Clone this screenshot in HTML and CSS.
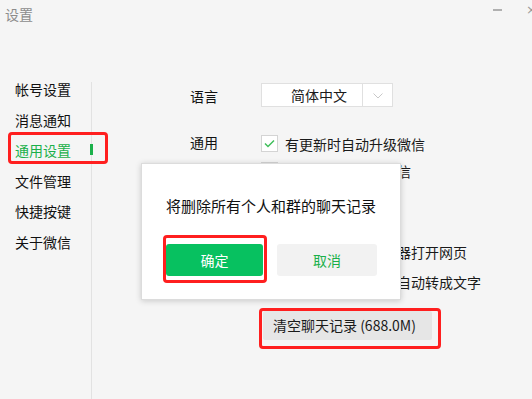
FILE: index.html
```html
<!DOCTYPE html>
<html lang="zh-CN">
<head>
    <meta charset="UTF-8">
    <meta name="viewport" content="width=device-width, initial-scale=1.0">
    <title>设置</title>
    <link rel="stylesheet" href="styles.css">
</head>
<body>
    <div class="window">
        <div class="titlebar">
            <span class="title">设置</span>
            <div class="controls">
                <span class="btn-min"></span>
                <span class="btn-close">×</span>
            </div>
        </div>

        <div class="main">
            <ul class="sidebar">
                <li>帐号设置</li>
                <li>消息通知</li>
                <li class="active">通用设置</li>
                <li>文件管理</li>
                <li>快捷按键</li>
                <li>关于微信</li>
            </ul>

            <div class="content">
                <div class="row">
                    <span class="label label-lang">语言</span>
                    <div class="select">
                        <span class="select-value">简体中文</span>
                        <span class="select-arrow">
                            <svg width="10" height="6" viewBox="0 0 10 6"><path d="M0.5 0.5 L5 5 L9.5 0.5" fill="none" stroke="#c8c8c8" stroke-width="1"/></svg>
                        </span>
                    </div>
                </div>

                <div class="row row-general">
                    <span class="label">通用</span>
                    <div class="options">
                        <div class="option">
                            <span class="checkbox checked">
                                <svg width="13" height="13" viewBox="0 0 13 13"><path d="M2 6.5 L5 9.5 L11 3.5" fill="none" stroke="#3fbf5a" stroke-width="1.5"/></svg>
                            </span>
                            <span>有更新时自动升级微信</span>
                        </div>
                        <div class="option">
                            <span class="checkbox"></span>
                            <span>开机时自动启动微信</span>
                        </div>
                        <div class="option">
                            <span class="checkbox"></span>
                            <span>保留聊天记录</span>
                        </div>
                        <div class="option">
                            <span class="checkbox"></span>
                            <span>显示网络搜索历史</span>
                        </div>
                        <div class="option">
                            <span class="checkbox"></span>
                            <span>使用系统默认浏览器打开网页</span>
                        </div>
                        <div class="option option-last">
                            <span class="checkbox"></span>
                            <span>聊天中的语音消息自动转成文字</span>
                        </div>
                        <button class="btn-clear">清空聊天记录 (688.0M)</button>
                    </div>
                </div>
            </div>
        </div>

        <!-- confirm dialog -->
        <div class="dialog">
            <p class="dialog-text">将删除所有个人和群的聊天记录</p>
            <div class="dialog-buttons">
                <button class="btn-ok">确定</button>
                <button class="btn-cancel">取消</button>
            </div>
        </div>
    </div>
</body>
</html>
```

FILE: styles.css
```css
*, *::before, *::after {
    box-sizing: border-box;
}

body {
    margin: 0;
    font-family: "Noto Sans CJK SC", "Liberation Sans", sans-serif;
    font-size: 14px;
    color: #1a1a1a;
    background: #f5f5f5;
}

.window {
    position: relative;
    width: 532px;
    height: 399px;
    overflow: hidden;
    background: #f5f5f5;
}

.titlebar {
    display: flex;
    justify-content: space-between;
    align-items: center;
    height: 28px;
    padding-left: 5px;
}

.title {
    font-size: 14px;
    line-height: 14px;
    color: #8c8c8c;
    margin-top: -1px;
}

.controls {
    display: flex;
    align-items: center;
    gap: 24px;
    margin-right: -5px;
    margin-top: -9px;
}

.btn-min {
    width: 9px;
    height: 2px;
    background: #b0b0b0;
}

.btn-close {
    font-family: "DejaVu Sans", sans-serif;
    font-size: 13px;
    line-height: 13px;
    color: #999;
}

.main {
    display: flex;
    height: 371px;
}

.sidebar {
    list-style: none;
    margin: 54px 0 0;
    padding: 0;
    width: 92px;
    border-right: 1px solid #e2e2e2;
}

.sidebar li {
    position: relative;
    padding-left: 15px;
    line-height: 14px;
    margin-bottom: 16.6px;
    color: #111;
}

.sidebar li.active {
    color: #1bb04a;
}

.sidebar li.active::after {
    content: "";
    position: absolute;
    right: -2px;
    top: 1px;
    width: 3px;
    height: 11px;
    background: #1bb04a;
}

/* annotation box */
.sidebar li.active::before {
    content: "";
    position: absolute;
    left: 8px;
    top: -11px;
    width: 100px;
    height: 32px;
    border: 3px solid #ff1f1f;
    border-radius: 4px;
}

.content {
    flex: 1;
    padding: 55px 0 0 98px;
}

.row {
    display: flex;
}

.label {
    width: 71px;
    line-height: 14px;
    color: #111;
}

.label-lang {
    margin-top: 6px;
}

.select {
    display: flex;
    width: 132px;
    height: 24px;
    background: #fff;
    border: 1px solid #e0e0e0;
}

.select-value {
    width: 101px;
    padding-left: 29px;
    line-height: 22px;
    border-right: 1px solid #e0e0e0;
}

.select-arrow {
    flex: 1;
    display: flex;
    align-items: center;
    justify-content: center;
    padding-top: 1px;
}

.row-general {
    margin-top: 28px;
}

.options {
    display: flex;
    flex-direction: column;
    gap: 10px;
}

.option {
    display: flex;
    align-items: center;
    gap: 7px;
    height: 17px;
    line-height: 14px;
}

.option-last {
    margin-top: 3.8px;
}

.checkbox {
    display: flex;
    align-items: center;
    justify-content: center;
    width: 17px;
    height: 17px;
    background: #fff;
    border: 1px solid #d4d4d4;
}

.btn-clear {
    position: relative;
    align-self: flex-start;
    margin: 10px 0 0 2px;
    width: 169px;
    height: 29px;
    padding: 0 0 0 10px;
    text-align: left;
    font-family: inherit;
    font-size: 14px;
    color: #1a1a1a;
    background: #e6e6e6;
    border: none;
    border-radius: 2px;
}

.btn-clear::after {
    content: "";
    position: absolute;
    left: -4px;
    top: -3px;
    width: 182px;
    height: 41px;
    border: 3px solid #ff1f1f;
    border-radius: 4px;
}

.dialog {
    position: absolute;
    left: 141px;
    top: 163px;
    width: 260px;
    height: 137px;
    background: #fff;
    border: 1px solid #dcdcdc;
    box-shadow: 0 1px 6px rgba(0,0,0,0.18);
    padding: 0 0 0 24px;
}

.dialog-text {
    margin: 33px 0 0;
    width: 210px;
    text-align: center;
    font-size: 15px;
    line-height: 18px;
    color: #111;
}

.dialog-buttons {
    display: flex;
    gap: 14px;
    margin-top: 29px;
}

.dialog-buttons button {
    height: 32px;
    border: none;
    border-radius: 3px;
    font-family: inherit;
    font-size: 14px;
}

.btn-ok {
    position: relative;
    width: 97px;
    background: #07c160;
    color: #fff;
}

.btn-ok::after {
    content: "";
    position: absolute;
    left: -3px;
    top: -9px;
    width: 104px;
    height: 48px;
    border: 3px solid #ff1f1f;
    border-radius: 4px;
}

.btn-cancel {
    width: 100px;
    background: #f2f2f2;
    color: #1bb04a;
}
```
